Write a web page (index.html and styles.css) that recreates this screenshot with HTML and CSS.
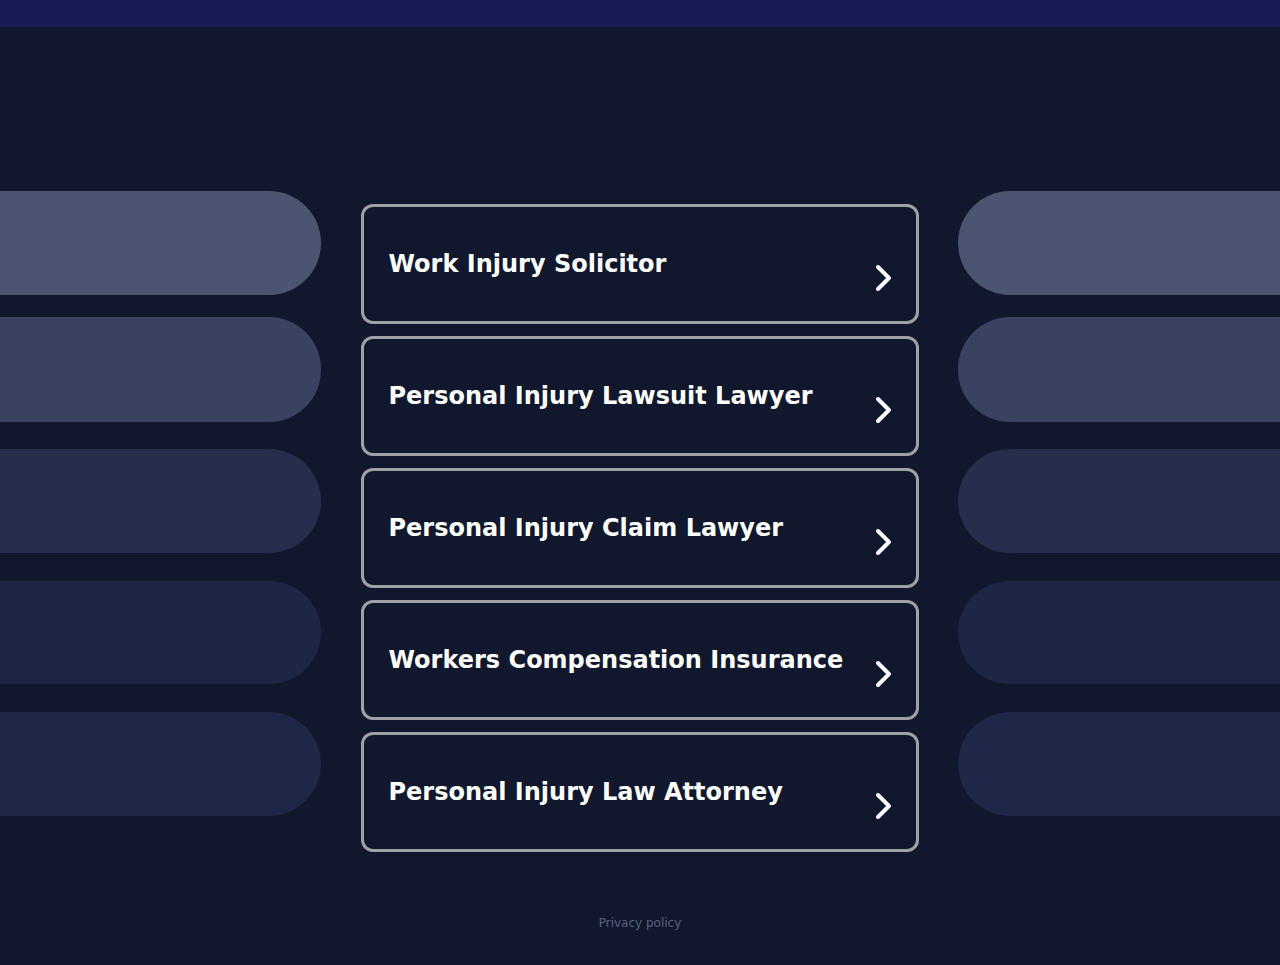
FILE: index.html
```html
<!DOCTYPE html>
<html lang="en">
<head>
<meta charset="utf-8">
<title>Related searches</title>
<link rel="stylesheet" href="styles.css">
</head>
<body>
<div class="topbar"></div>
<div class="stage">
  <div class="side side-left">
    <div class="pill p1"></div>
    <div class="pill p2"></div>
    <div class="pill p3"></div>
    <div class="pill p4"></div>
    <div class="pill p5"></div>
  </div>
  <div class="links">
    <a class="card" href="#"><span class="label">Work Injury Solicitor</span><svg class="chev" width="20" height="30" viewBox="0 0 20 30"><polyline points="4,4 15,15 4,26" /></svg></a>
    <a class="card" href="#"><span class="label">Personal Injury Lawsuit Lawyer</span><svg class="chev" width="20" height="30" viewBox="0 0 20 30"><polyline points="4,4 15,15 4,26" /></svg></a>
    <a class="card" href="#"><span class="label">Personal Injury Claim Lawyer</span><svg class="chev" width="20" height="30" viewBox="0 0 20 30"><polyline points="4,4 15,15 4,26" /></svg></a>
    <a class="card" href="#"><span class="label">Workers Compensation Insurance</span><svg class="chev" width="20" height="30" viewBox="0 0 20 30"><polyline points="4,4 15,15 4,26" /></svg></a>
    <a class="card" href="#"><span class="label">Personal Injury Law Attorney</span><svg class="chev" width="20" height="30" viewBox="0 0 20 30"><polyline points="4,4 15,15 4,26" /></svg></a>
  </div>
  <div class="side side-right">
    <div class="pill p1"></div>
    <div class="pill p2"></div>
    <div class="pill p3"></div>
    <div class="pill p4"></div>
    <div class="pill p5"></div>
  </div>
</div>
<footer class="footer"><a href="#" class="privacy">Privacy policy</a></footer>
</body>
</html>
```

FILE: styles.css
```css
html, body {
  margin: 0;
  padding: 0;
}
body {
  background: #11172c;
  font-family: "DejaVu Sans", "Liberation Sans", sans-serif;
  height: 965px;
  overflow: hidden;
}
.topbar {
  height: 27px;
  background: #181c55;
  border-bottom: 1px solid #1c1f4c;
  box-sizing: border-box;
}
.stage {
  display: flex;
  align-items: flex-start;
  justify-content: space-between;
}
.side {
  width: 321px;
  padding-top: 164px;
  display: flex;
  flex-direction: column;
}
.side-right {
  width: 322px;
}
.pill {
  height: 104px;
}
.side-left .pill {
  border-radius: 0 52px 52px 0;
}
.side-right .pill {
  border-radius: 52px 0 0 52px;
}
.p1 { background: #4b5571; }
.p2 { background: #3a4261; margin-top: 22px; height: 105px; }
.p3 { background: #272e4d; margin-top: 27px; }
.p4 { background: #1e2646; margin-top: 28px; height: 103px; }
.p5 { background: #1e2747; margin-top: 28px; }
.links {
  width: 558px;
  padding-top: 177px;
  display: flex;
  flex-direction: column;
  gap: 12px;
}
.card {
  box-sizing: border-box;
  height: 120px;
  border: 3px solid #a0a0a5;
  border-radius: 12px;
  display: flex;
  align-items: center;
  justify-content: space-between;
  padding: 0 22px 0 25px;
  text-decoration: none;
  color: #ffffff;
  background: #11172c;
}
.label {
  font-weight: bold;
  font-size: 24px;
  margin-top: 0;
}
.chev {
  margin-top: 27px;
}
.chev polyline {
  fill: none;
  stroke: #ffffff;
  stroke-width: 4;
  stroke-linecap: round;
  stroke-linejoin: round;
}
.footer {
  text-align: center;
  padding-top: 60px;
}
.privacy {
  font-size: 12px;
  color: #5c6380;
  text-decoration: none;
}
```
